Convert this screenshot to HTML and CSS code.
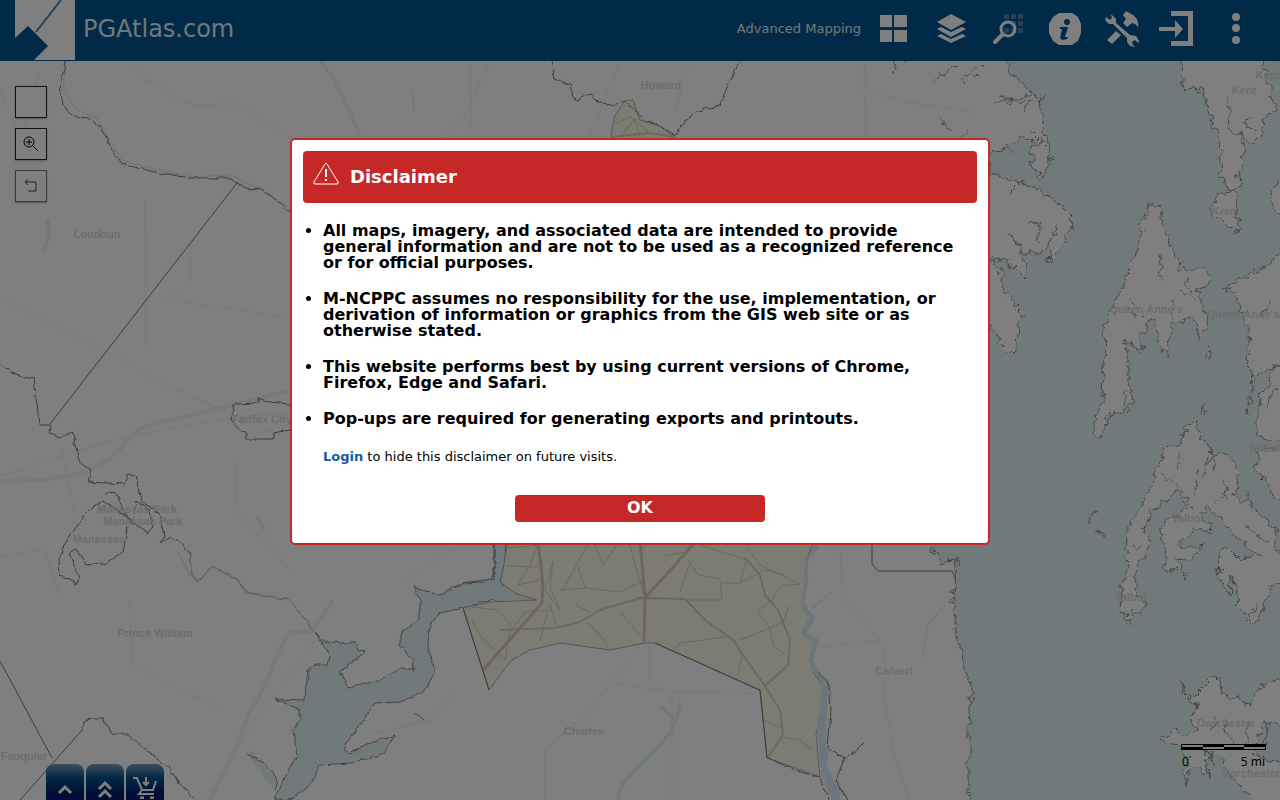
FILE: index.html
```html
<!DOCTYPE html>
<html lang="en">
<head>
    <meta charset="UTF-8">
    <meta name="viewport" content="width=device-width, initial-scale=1.0">
    <title>PGAtlas.com</title>
    <link rel="stylesheet" href="styles.css">
</head>
<body>
    <header class="topbar">
        <svg class="logo" viewBox="0 0 60 60" aria-hidden="true">
            <rect width="60" height="60" fill="#fff"/>
            <path d="M0 38L13 26L33 46L19 60H0z" fill="#00548e"/>
            <path d="M46 0L21 32" stroke="#4a7ea8" stroke-width="2"/>
        </svg>
        <h1 class="site-name">PGAtlas.com</h1>
        <nav class="tools">
            <span class="mode">Advanced Mapping</span>
            <button class="tool" aria-label="Basemaps">
                <svg viewBox="0 0 36 36"><path d="M4 4h12v12H4zM18 4h13v12H18zM4 19h12v12H4zM18 19h13v12H18z"/></svg>
            </button>
            <button class="tool" aria-label="Layers">
                <svg viewBox="0 0 36 36"><path d="M18 3L33 11L18 19L4 11zM4 18L8 16L18 21L29 16L33 18L18 26zM4 25L8 23L18 28L29 23L33 25L18 32z"/></svg>
            </button>
            <button class="tool" aria-label="Search">
                <svg viewBox="0 0 36 36">
                    <path d="M14 3h5v5h-5zM21 3h5v5h-5zM28 3h5v5h-5zM21 10h5v5h-5zM28 10h5v5h-5zM14 17h5v5h-5zM21 17h5v5h-5zM28 17h5v5h-5z" fill="#4b83ad"/>
                    <circle cx="18" cy="18" r="7" fill="none" stroke="#fff" stroke-width="3"/>
                    <path d="M12 24L5 31" stroke="#fff" stroke-width="4" stroke-linecap="round"/>
                </svg>
            </button>
            <button class="tool" aria-label="Information">
                <svg viewBox="0 0 36 36">
                    <path d="M12 2h13l6 4l3 7v9l-3 8l-6 4H12l-6-4l-4-8v-9l4-7z"/>
                    <circle cx="20" cy="11" r="3" fill="#00548e"/>
                    <path d="M13 16h8l-3 10h3l-1 2l-5 1l-2-2l2-9h-2z" fill="#00548e"/>
                </svg>
            </button>
            <button class="tool" aria-label="Tools">
                <svg viewBox="0 0 36 36">
                    <path d="M3 3l5 1l4 4v4l14 12l6 1l3 5l-1 2l-3-3l-3 2l1 3l2 2l-5-1l-3-4v-4L9 13H5L1 9l1-3l4 3l2-2l-1-3z"/>
                    <path d="M22 0l7 4c4 3 6 7 5 12l-3-3l-3-1l-5 4l-4-4l3-4l-3-4zM12 20l5 4L8 33l-5-4z"/>
                </svg>
            </button>
            <button class="tool" aria-label="Sign in">
                <svg viewBox="0 0 36 36"><path d="M10 0h22v35H10v-5h17V5H10zM-2 16h16V9l8 9l-8 9v-7H-2z"/></svg>
            </button>
            <button class="tool" aria-label="More">
                <svg viewBox="0 0 36 36"><circle cx="18" cy="6" r="4"/><circle cx="18" cy="17" r="4"/><circle cx="18" cy="29" r="4"/></svg>
            </button>
        </nav>
    </header>

    <main class="map">
        <svg class="map-canvas" viewBox="0 61 1280 739" preserveAspectRatio="xMidYMin slice" aria-label="County map">
            <defs>
                <filter id="shore" x="0" y="0" width="100%" height="100%">
                    <feTurbulence type="fractalNoise" baseFrequency="0.11" numOctaves="3" seed="4" result="noise"/>
                    <feDisplacementMap in="SourceGraphic" in2="noise" scale="13" xChannelSelector="R" yChannelSelector="G"/>
                </filter>
                <filter id="border" x="0" y="0" width="100%" height="100%">
                    <feTurbulence type="fractalNoise" baseFrequency="0.12" numOctaves="2" seed="8" result="noise"/>
                    <feDisplacementMap in="SourceGraphic" in2="noise" scale="5" xChannelSelector="R" yChannelSelector="G"/>
                </filter>
            </defs>

            <!-- faint roads -->
            <g class="road">
                <path d="M0 298L105 350L150 377L222 410L290 440"/>
                <path class="wide" d="M0 481C40 482 75 478 105 462C125 450 130 432 145 426L290 391"/>
                <path d="M0 477C50 460 100 442 140 434L230 418L290 412"/>
                <path class="wide" d="M333 600L312 631L290 632C275 650 270 685 248 715L235 750L210 800"/>
                <path d="M315 640C290 680 275 690 245 735L205 800"/>
                <path class="wide" d="M320 61L335 80L360 135"/>
                <path d="M130 61L145 80L165 85L175 100L200 106L235 103L262 120L290 138"/>
                <path d="M145 200L146 350M190 240V285L165 300L240 310L290 318M130 600L132 665L180 690L225 710"/>
                <path d="M640 645L590 710L545 750V800M650 645V680L672 700V800M615 683L670 692L755 693"/>
                <path d="M400 583L455 547M455 690L430 720L370 735M840 546L843 600L885 645V700L895 760L910 800"/>
                <path d="M820 647L880 640M490 61L465 115L440 140M470 61L472 138M620 61L590 135M690 61L675 110"/>
                <path d="M865 61C862 90 868 115 865 138M860 88L905 102L975 112M0 88L20 140L40 70"/>
                <path d="M0 556L45 550L60 600M62 450L75 515M235 460L237 510L290 570"/>
            </g>

            <!-- streams -->
            <g class="stream">
                <path class="thin" d="M66 61L63 90L77 110L97 118L110 141L123 161L157 170L192 177L232 175L257 188L290 208"/>
                <path d="M47 220L50 232L44 250M257 517L265 530M680 702C678 720 672 735 650 755C630 775 618 785 618 800M660 706L675 720"/>
                <path class="thin" d="M945 605L928 625L922 660M832 592L812 608M412 92L414 110M250 750L275 790M178 552L190 575L200 580L212 567L238 580L245 592L290 600"/>
            </g>

            <!-- rivers and the bay -->
            <g filter="url(#border)">
                <path class="water" d="M494 535V575L485 582L463 583L440 595L422 590L413 586L420 600V618L410 626L400 634V645L413 660L414 670L400 668L380 680L348 688L340 672L355 660L365 652L358 650L355 643L325 642L315 632L330 655L328 665L315 665L308 670L305 700L275 699L300 710L300 720L293 730L297 756L285 775L275 800H290L310 785L320 765L350 763L375 757L385 752L395 735L365 745L350 754L343 748L362 722L375 703L400 702L425 690L435 672L428 645L430 625L440 613L463 608L490 600L520 604L537 600L515 592L500 582L505 565L506 535z"/>
                <path class="water" d="M247 754L260 760L273 772L277 785L275 790M415 713L425 720"/>
            </g>
            <g filter="url(#shore)">
                <path class="water" d="M1003 35L1008 72L1022 83L1033 92L1034 96L1042 98L1040 120L1048 143L1051 158L1043 178L1032 165L1031 150L1040 143L1020 138L1005 150L990 153V178L997 174L1012 180L1035 188L1058 203L1070 215L1073 228L1062 245L1049 264L1050 245L1040 254L1024 254L1008 231L1020 245L1027 268L1024 278L1017 268L1003 262L985 258L1000 268L1003 285L1010 300L1025 315L1018 327L1017 345L1012 355L1000 343L994 325L975 330V450L925 530L930 546L943 562L958 563L956 577L953 600L957 640L968 675L972 690L969 720V790L972 820H1320V35z"/>
                <g class="land">
                    <path d="M1155 204L1158 203L1160 212L1165 228L1175 252L1180 262L1182 270L1200 266L1212 280L1198 290L1208 330L1200 340L1192 315L1170 325L1168 345L1166 358L1160 342L1156 325L1150 320L1140 340L1146 350H1140L1125 342L1128 360V380L1134 402L1125 412L1112 416L1104 422L1102 437L1094 436V422L1102 402L1103 370L1104 330L1110 310L1125 280L1132 262L1140 245L1142 225L1148 208z"/>
                    <path d="M1180 35L1182 85L1205 93L1209 115L1220 140L1222 180L1228 190L1240 185L1238 170L1244 160L1243 145L1238 135L1250 140L1255 143L1263 133L1262 120L1275 110L1268 85L1260 50V35z"/>
                    <path d="M1216 196L1232 190L1240 195L1235 215L1243 230L1235 232L1215 215L1213 205zM1290 175L1271 190L1272 205L1290 222zM1280 61L1290 80V50z"/>
                    <path d="M1232 285L1245 278L1260 270L1290 248V365L1272 365L1266 390L1260 396L1258 410V437L1290 445V360L1256 375L1252 400L1247 416L1250 395L1253 368L1250 365L1248 345L1249 330L1242 315L1238 297L1222 287z"/>
                    <path d="M1160 460L1165 448L1180 445L1183 430L1190 425L1205 405V412L1195 425L1205 440L1212 455L1225 453L1240 470L1235 495L1250 505L1267 520L1275 530V550L1290 560V578L1270 585L1265 605L1255 625L1240 610L1238 595L1232 575L1230 595L1218 575L1220 552L1230 550L1240 560L1255 553L1262 555L1245 545L1228 530L1220 515L1205 505L1200 515L1213 525L1210 535L1195 530L1178 545L1190 548L1203 545L1190 560L1175 557L1188 580L1178 570L1165 573L1168 552L1160 530L1165 520L1188 510L1180 492L1165 500L1148 515L1143 525L1150 535L1145 555L1136 573L1134 590L1143 600V615H1135L1130 610L1129 626L1120 605L1123 580L1128 568L1126 550L1127 530L1135 515L1141 508L1143 500L1153 485L1155 470z"/>
                    <path d="M1258 450L1290 445V505L1272 498L1265 480L1255 470zM1095 508L1089 515L1088 523L1093 514zM1098 531L1106 533L1103 537zM1209 347L1212 350L1210 359L1206 358z"/>
                    <path d="M1177 677L1190 700L1200 690L1210 680L1222 677L1220 695L1240 697L1246 705L1260 688L1290 673V730L1262 720L1258 740L1248 745L1258 758L1290 765V830L1250 800L1235 780L1212 750L1205 760L1210 780L1196 765L1190 770L1187 785L1184 770L1190 760L1178 745L1160 739L1173 730L1185 735L1195 730L1192 718L1199 705L1187 700z"/>
                </g>
                <path class="creek" d="M930 82L945 75L955 65M938 70L945 78M962 85L970 70L985 65M970 75L980 78M892 73L895 61L903 58M995 105L1010 100L1030 102L1024 110M1000 96L1015 101L1030 94M940 117L952 135M960 138L970 130M1000 150L1005 143L1012 153M1010 195L1018 187M1028 225L1040 222L1036 235M1042 220L1038 240M1057 225L1050 247M1030 130L1045 145M1130 300L1145 315M1128 310L1138 322M1175 300L1172 325M1185 280L1195 300M1180 290L1190 296M1228 95L1230 130L1240 135M1250 115L1244 125L1255 130M1160 475L1178 485L1195 510M1180 455L1178 470M1198 470L1193 495M1210 455L1203 480M1222 480L1230 500M1226 490L1215 505M1245 525L1258 535M1205 440L1216 470M1223 720L1233 745M1250 720L1245 745M1202 745L1215 765M1215 715L1214 730M1270 720L1262 750M1274 388L1266 410M1270 300L1262 320M1245 490L1250 510M1126 390L1124 410M1257 605L1251 618M1160 255L1162 280M1130 545L1142 550M1258 535L1268 540"/>
            </g>

            <!-- Prince George's County -->
            <path class="county" d="M508 540L503 570L500 582L515 593L537 600L490 602L463 608L489 690L500 675L512 660L530 650L560 643L610 650L645 643H655L755 688L760 690L767 758L820 777L816 735L826 690L815 675L810 660L815 640L803 632L812 615L803 605L806 575V560L815 540zM610 140L615 115L625 101L633 100L640 120L660 126L675 138L678 142z"/>
            <g class="street">
                <path d="M508 548L540 545M507 566L538 567M538 545L530 565L518 585L540 580M553 562L545 590L560 610L550 588zM590 540L563 590M595 545L603 565L617 545M560 590L585 588L578 568M645 580L620 592L585 588M628 540L637 570L645 598M665 556L685 552L690 545M690 562L680 592M688 560L698 575L720 579L722 600L685 600M722 583L740 583L747 560L700 545M747 548L760 565L800 584M740 583L765 570L785 575M800 584L780 586L772 600M575 605L590 612M463 611L475 607L497 610L515 629M472 620L481 637L505 660L510 630M512 630L525 612L548 610L540 640M550 605L556 625M587 622L600 635L610 650M620 612L640 635M672 652L680 643L725 637M772 600L757 612L770 628L740 640M770 628L773 645L785 655M735 640L742 655L738 675M762 720L780 727M783 737L800 740L812 750M790 605L783 622L770 628M612 125L630 117L650 133M618 140L635 119L640 138"/>
                <path class="main" d="M500 630L555 628L580 622L600 610L640 598L685 599L705 620L733 640L743 655L765 686L780 710L783 735L768 757M745 558L760 575L765 595L778 610L790 640L788 665L765 686M610 137L650 133L675 137"/>
                <path class="freeway" d="M538 540L543 585L542 603L483 670M640 540L645 598L644 643M693 545L645 598"/>
            </g>
            <g class="river" filter="url(#border)">
                <path d="M815 535L816 548L806 562V582L802 605L812 618L804 634L816 642L811 662L822 680L826 700L819 720L820 745L823 770L834 800"/>
                <path class="mouth" d="M825 685L822 735L824 768L840 800"/>
            </g>

            <!-- county boundaries -->
            <g class="boundary">
                <path d="M237 183L50 424M0 661L52 758M20 800L83 729M463 608L489 690M655 643L755 688L760 690L767 758M872 540V564L878 571H952L956 579"/>
                <g filter="url(#border)">
                    <path d="M66 61L60 85L63 105L72 115L95 121L106 137L112 150L121 164L155 172L190 178L230 178L250 190L258 189L270 195L290 212"/>
                    <path d="M0 365L25 379L34 377L38 413L39 425L50 425L49 433L60 437L73 433L76 448L80 463L91 470L88 482L125 484L128 475L135 476L142 502L160 513L162 525L165 535L160 543L170 537L182 543L190 555"/>
                    <path class="soft" d="M190 555L192 575L198 582L212 566L238 580L245 592L290 600L315 632"/>
                    <path d="M105 493L119 494L121 508L133 525L137 501L150 510L152 526L148 533L103 500L85 514L64 545L59 560L60 575L77 584L79 578L69 553L77 548L87 565L107 562L123 552L128 525"/>
                    <path d="M234 405L231 417L238 429L246 432V439H273V433L290 430M234 404L258 403L258 398L269 402L290 404"/>
                    <path d="M83 729L84 722L93 718H103L112 734H127L147 751L170 768L178 782L195 800"/>
                    <path d="M551 61L555 79L570 85L575 100L590 95L605 106L625 101L645 120L660 126L675 135L688 118L703 109L720 106L728 85L740 61"/>
                    <path d="M495 545V578L463 583M767 758L800 772L820 777L828 800M820 673L829 685L831 710L828 750L845 758L865 744M845 758L835 780L847 800"/>
                </g>
            </g>

            <g class="label">
                <text x="661" y="89">Howard</text>
                <text x="97" y="238">Loudoun</text>
                <text x="262" y="423">Fairfax City</text>
                <text x="137" y="513">Manassas Park</text>
                <text x="143" y="525">Manassas Park</text>
                <text x="99" y="543">Manassas</text>
                <text x="155" y="637">Prince William</text>
                <text x="24" y="760">Fauquier</text>
                <text x="584" y="735">Charles</text>
                <text x="894" y="675">Calvert</text>
                <text x="1244" y="94">Kent</text>
                <text x="1268" y="79">Kent</text>
                <text x="1224" y="215">Kent</text>
                <text x="1146" y="313">Queen Anne's</text>
                <text x="1243" y="318">Queen Anne's</text>
                <text x="1264" y="452">Talbot</text>
                <text x="1188" y="522">Talbot</text>
                <text x="1131" y="601">Talbot</text>
                <text x="1226" y="727">Dorchester</text>
                <text x="1251" y="777">Dorchester</text>
            </g>
        </svg>

        <div class="map-buttons">
            <button class="map-button" aria-label="Home"></button>
            <button class="map-button" aria-label="Zoom in">
                <svg viewBox="0 0 16 16"><circle cx="6" cy="6" r="5"/><path d="M3 6h6M6 3v6M9 9l6 6"/></svg>
            </button>
            <button class="map-button faded" aria-label="Previous extent">
                <svg viewBox="0 0 16 16"><path d="M5 1L2 4l3 3M2 4h11v9H5"/></svg>
            </button>
        </div>

        <div class="tabs">
            <button class="tab" aria-label="Expand">
                <svg viewBox="0 0 24 24"><path d="M6 18L12 12L18 18"/></svg>
            </button>
            <button class="tab" aria-label="Expand all">
                <svg viewBox="0 0 24 24"><path d="M6 14L12 8L18 14M6 22L12 16L18 22"/></svg>
            </button>
            <button class="tab cart" aria-label="Cart">
                <svg viewBox="0 0 24 24"><path d="M0 3h4l5 12h11l3-9M9 15l-3 4h15M13 2v8M10 7l3 3l3-3"/><path d="M7 23h4M17 23h4" stroke-width="3"/></svg>
            </button>
        </div>

        <div class="scale">
            <div class="scale-bar"><i></i><i></i><i></i><i></i></div>
            <div class="scale-text"><span>0</span><span>5 mi</span></div>
        </div>
    </main>

    <div class="overlay">
        <section class="dialog" role="dialog" aria-labelledby="dialogTitle">
            <div class="dialog-header">
                <svg class="warning" viewBox="0 0 26 24"><path d="M12 2q1-2 2 0L25 20q1 2-1 2H2q-2 0-1-2z"/><path d="M13 7v8M13 17v2" stroke-width="2"/></svg>
                <h2 id="dialogTitle">Disclaimer</h2>
            </div>
            <ul class="terms">
                <li>All maps, imagery, and associated data are intended to provide general information and are not to be used as a recognized reference or for official purposes.</li>
                <li>M-NCPPC assumes no responsibility for the use, implementation, or derivation of information or graphics from the GIS web site or as otherwise stated.</li>
                <li>This website performs best by using current versions of Chrome, Firefox, Edge and Safari.</li>
                <li>Pop-ups are required for generating exports and printouts.</li>
            </ul>
            <p class="login"><a href="#">Login</a> to hide this disclaimer on future visits.</p>
            <button class="ok">OK</button>
        </section>
    </div>
</body>
</html>
```
FILE: styles.css
```css
* {
    box-sizing: border-box;
}
body {
    margin: 0;
    height: 100vh;
    display: flex;
    flex-direction: column;
    overflow: hidden;
    font-family: "DejaVu Sans", Verdana, sans-serif;
    font-size: 13px;
}
button {
    font-family: inherit;
    cursor: pointer;
}
.topbar {
    display: flex;
    align-items: center;
    flex: none;
    height: 61px;
    padding: 0 16px 0 15px;
    background-color: #00548e;
    color: #e4eef6;
}
.logo {
    width: 60px;
    height: 60px;
    align-self: flex-start;
}
.site-name {
    margin: 0 0 4px 8px;
    font-size: 24px;
    font-weight: normal;
}
.tools {
    display: flex;
    align-items: center;
    margin-left: auto;
    padding-bottom: 4px;
}
.mode {
    margin-right: 4px;
}
.tool {
    display: flex;
    justify-content: center;
    width: 57px;
    padding: 0;
    border: none;
    background: none;
}
.tool svg {
    width: 36px;
    height: 36px;
    fill: #fff;
    overflow: visible;
}
.map {
    position: relative;
    flex: 1;
    min-height: 0;
    background-color: #fff;
}
.map-canvas {
    display: block;
    width: 100%;
    height: 100%;
}
.water {
    fill: #e5f3f7;
    stroke: #888;
    stroke-width: 1;
}
.land {
    fill: #fff;
    stroke: #888;
    stroke-width: 1;
}
.creek {
    fill: none;
    stroke: #8b9294;
    stroke-width: 1;
}
.road {
    fill: none;
    stroke: #f7f7f7;
    stroke-width: 2;
}
.road .wide {
    stroke: #f2f2f2;
    stroke-width: 4;
}
.stream {
    fill: none;
    stroke: #e5f3f7;
    stroke-width: 4;
}
.stream .thin {
    stroke-width: 2;
}
.river {
    fill: none;
    stroke: #d9ecf4;
    stroke-width: 4;
}
.river .mouth {
    stroke-width: 7;
}
.county {
    fill: #f9f9e8;
    stroke: #aaa;
    stroke-width: 1;
}
.street {
    fill: none;
    stroke: #d2d2b8;
    stroke-width: 1;
    stroke-linejoin: round;
}
.street .main {
    stroke: #d4d4ae;
    stroke-width: 2;
}
.street .freeway {
    stroke: #dcc9c0;
    stroke-width: 3;
}
.boundary {
    fill: none;
    stroke: #777;
    stroke-width: 1;
}
.boundary .soft {
    stroke: #aab8bc;
}
.label {
    fill: #dadada;
    font-family: "Liberation Sans", Arial, sans-serif;
    font-size: 11px;
    font-weight: bold;
    text-anchor: middle;
}
.map-buttons {
    position: absolute;
    top: 25px;
    left: 15px;
    display: flex;
    flex-direction: column;
    gap: 10px;
}
.map-button {
    display: flex;
    align-items: center;
    justify-content: center;
    width: 32px;
    height: 32px;
    padding: 0;
    border: 1px solid #222;
    background-color: #fff;
    box-shadow: 0 1px 2px rgba(0, 0, 0, 0.3);
}
.map-button svg {
    width: 16px;
    height: 16px;
    fill: none;
    stroke: #000;
    stroke-width: 1;
}
.faded {
    border-color: #777;
}
.faded svg {
    stroke: #444;
}
.tabs {
    position: absolute;
    bottom: 0;
    left: 46px;
    display: flex;
    gap: 2px;
}
.tab {
    width: 38px;
    height: 36px;
    padding: 10px 0 0;
    border: none;
    border-radius: 8px 8px 0 0;
    background: linear-gradient(#7a9cb8, #004f86 40%, #002068 80%, #001a78);
}
.tab svg {
    display: block;
    width: 24px;
    height: 24px;
    margin: 0 auto;
    fill: none;
    stroke: #fff;
    stroke-width: 3;
}
.cart svg {
    stroke-width: 2;
}
.scale {
    position: absolute;
    right: 14px;
    bottom: 30px;
    width: 85px;
    font-family: "Noto Sans", sans-serif;
    font-size: 12px;
    line-height: 16px;
}
.scale-bar {
    display: flex;
    height: 6px;
    border: 1px solid #000;
    background: linear-gradient(#fff 50%, #000 50%);
}
.scale-bar i {
    flex: 1;
}
.scale-bar i:nth-child(even) {
    background: linear-gradient(#000 50%, #fff 50%);
}
.scale-text {
    display: flex;
    justify-content: space-between;
    padding: 4px 1px 0;
}
.overlay {
    position: fixed;
    inset: 0;
    display: flex;
    align-items: flex-start;
    justify-content: center;
    padding-top: 138px;
    background-color: rgba(0, 0, 0, 0.5);
}
.dialog {
    width: 700px;
    max-width: 100%;
    padding: 11px 11px 21px;
    border: 2px solid #c62828;
    border-radius: 5px;
    background-color: #fff;
    color: #000;
}
.dialog-header {
    display: flex;
    align-items: center;
    gap: 11px;
    height: 52px;
    padding: 0 10px 2px;
    border-radius: 4px;
    background-color: #c62828;
    color: #fff;
}
.dialog-header h2 {
    margin: 0;
    font-size: 18px;
}
.warning {
    width: 26px;
    height: 24px;
    margin-bottom: 4px;
    fill: none;
    stroke: #fff;
    stroke-width: 1;
}
.terms {
    margin: 20px 20px 0 0;
    padding-left: 20px;
    font-size: 16px;
    font-weight: bold;
    line-height: 16px;
}
.terms li {
    margin-bottom: 20px;
}
.login {
    margin: 22px 20px 0;
    line-height: 16px;
}
.login a {
    color: #1a5aa6;
    font-weight: bold;
    text-decoration: none;
}
.ok {
    display: block;
    width: 250px;
    height: 27px;
    margin: 30px auto 0;
    padding: 0 0 3px;
    border: none;
    border-radius: 4px;
    background-color: #c62828;
    color: #fff;
    font-size: 16px;
    font-weight: bold;
}
```
